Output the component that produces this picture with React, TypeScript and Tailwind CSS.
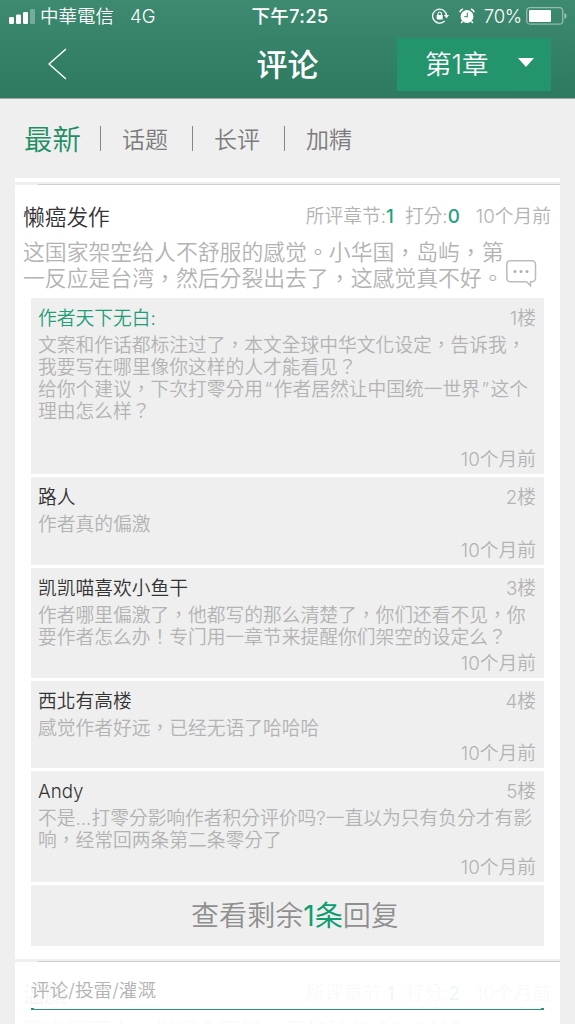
import clsx from 'clsx';

const tabs = ['话题', '长评', '加精'];

type Reply = {
  name: string;
  floor: string;
  lines: string[];
  author?: boolean;
  height: string;
};

const replies: Reply[] = [
  {
    name: '作者天下无白:',
    floor: '1楼',
    lines: [
      '文案和作话都标注过了，本文全球中华文化设定，告诉我，',
      '我要写在哪里像你这样的人才能看见？',
      '给你个建议，下次打零分用“作者居然让中国统一世界”这个',
      '理由怎么样？',
    ],
    author: true,
    height: 'h-[176px]',
  },
  { name: '路人', floor: '2楼', lines: ['作者真的偏激'], height: 'h-[88px]' },
  {
    name: '凯凯喵喜欢小鱼干',
    floor: '3楼',
    lines: [
      '作者哪里偏激了，他都写的那么清楚了，你们还看不见，你',
      '要作者怎么办！专门用一章节来提醒你们架空的设定么？',
    ],
    height: 'h-[110px]',
  },
  {
    name: '西北有高楼',
    floor: '4楼',
    lines: ['感觉作者好远，已经无语了哈哈哈'],
    height: 'h-[87px]',
  },
  {
    name: 'Andy',
    floor: '5楼',
    lines: [
      '不是...打零分影响作者积分评价吗?一直以为只有负分才有影',
      '响，经常回两条第二条零分了',
    ],
    height: 'h-[111px]',
  },
];

function StatusBar() {
  return (
    <div className="grid h-8 grid-cols-[1fr_auto_1fr] items-center pr-[8px] pl-[9px] text-[18.5px] leading-8">
      <div className="flex items-center">
        <svg width="26" height="15" viewBox="0 0 26 15" fill="white">
          <rect x="0" y="8" width="5" height="7" rx="1.3" />
          <rect x="7" y="5.5" width="5" height="9.5" rx="1.3" />
          <rect x="14" y="3" width="5" height="12" rx="1.3" />
          <rect x="21" y="0" width="5" height="15" rx="1.3" opacity="0.3" />
        </svg>
        <span className="ml-[5px]">中華電信</span>
        <span className="ml-4">4G</span>
      </div>
      <span className="ml-[4px] font-medium tracking-[0.3px]">下午7:25</span>
      <div className="flex items-center justify-end">
        <svg width="17" height="16" viewBox="0 0 17 16" fill="none" stroke="white" strokeWidth="1.3">
          <path d="M12.6 13A7 7 0 1 1 14.6 8" />
          <path d="M12 7h5l-2.5 3.4z" fill="white" stroke="none" />
          <rect x="4.7" y="7" width="6" height="4.4" rx="0.6" fill="white" stroke="none" />
          <path d="M6 7V5.7a1.7 1.7 0 0 1 3.4 0V7" strokeWidth="1.1" />
        </svg>
        <svg className="ml-[10px]" width="16" height="16" viewBox="0 0 16 16">
          <circle cx="8" cy="8.5" r="6.4" fill="white" />
          <path d="M.8 4.2A5 5 0 0 1 4 1M15.2 4.2A5 5 0 0 0 12 1M3.5 13.2 2.2 15M12.5 13.2l1.3 1.8" stroke="white" strokeWidth="1.5" fill="none" />
          <path d="M8.3 4.8v4H5.2" stroke="#378368" strokeWidth="1.1" fill="none" />
        </svg>
        <span className="ml-[9px] tracking-[-0.2px]">70%</span>
        <svg className="ml-[4px]" width="41" height="18" viewBox="0 0 41 18">
          <rect x="0.7" y="0.7" width="36" height="16.4" rx="3.2" fill="none" stroke="white" strokeOpacity="0.45" strokeWidth="1.3" />
          <rect x="3" y="3" width="22" height="12" rx="1" fill="white" />
          <path d="M38.4 6v6c1.4-.5 2.2-1.7 2.2-3s-.8-2.5-2.2-3z" fill="white" fillOpacity="0.5" />
        </svg>
      </div>
    </div>
  );
}

function Header() {
  return (
    <header className="h-[99px] border-b border-[#9aaba4] bg-linear-to-b from-[#3d8a70] to-[#2e7a60] text-white">
      <StatusBar />
      <div className="grid grid-cols-[1fr_auto_1fr] items-center pt-[6px] pr-[24px] pl-[48px]">
        <svg className="-mt-0.5" width="19" height="32" viewBox="0 0 19 32" fill="none" stroke="white" strokeWidth="1.5">
          <path d="M18 1 1 16l17 15" />
        </svg>
        <h1 className="-ml-6 text-[31px] leading-[53px] font-medium">评论</h1>
        <button className="flex h-[53px] w-[154px] items-center justify-between justify-self-end bg-[#23946c] pr-[17px] pl-[28px] text-[26.5px]">
          <span>第1章</span>
          <svg className="-mt-1" width="16" height="9" viewBox="0 0 16 9" fill="white">
            <path d="M0 0h16L8 9z" />
          </svg>
        </button>
      </div>
    </header>
  );
}

function Tabs() {
  return (
    <nav className="flex h-[79px] items-center pl-[24px] text-[23px] text-[#7b7b7b]">
      <span className="w-[59px] pt-[3px] text-[28.5px] whitespace-nowrap text-[#1f8e63]">最新</span>
      {tabs.map((tab, i) => (
        <div key={tab} className={clsx('flex items-center', i === 0 ? 'ml-[17px]' : 'ml-[23px]')}>
          <i className="h-[25px] w-px bg-[#858585]" />
          <span className="ml-[21px] w-[47px] pt-[3px]">{tab}</span>
        </div>
      ))}
    </nav>
  );
}

function ChatIcon() {
  return (
    <svg width="31" height="28" viewBox="0 0 31 28" fill="none" stroke="#bcbcbc" strokeWidth="1.5">
      <path d="M4 .8h22A3.500 3.500 0 0 1 29.500 4.300v14a3.500 3.500 0 0 1-3.500 3.500H24.500v4L20.500 21.800H4A3.500 3.500 0 0 1 .8 18.300v-14A3.500 3.500 0 0 1 4 .8z" />
      <g fill="#b0b0b0" stroke="none">
        <circle cx="9" cy="11.5" r="1.5" />
        <circle cx="15" cy="11.5" r="1.5" />
        <circle cx="21" cy="11.5" r="1.5" />
      </g>
    </svg>
  );
}

function Meta({ score }: { score: string }) {
  return (
    <div className="flex text-[18.75px] whitespace-nowrap text-[#b3b3b3]">
      <span>
        所评章节:<b className="font-medium text-[#1fa27b]">1</b>
      </span>
      <span className="ml-[11px]">
        打分:<b className="font-medium text-[#1fa27b]">{score}</b>
      </span>
      <span className="ml-[16px]">10个月前</span>
    </div>
  );
}

// curly quotes get a little extra room between the ideographs
function ReplyLine({ text }: { text: string }) {
  return (
    <p className="h-[22px] leading-[22px] whitespace-nowrap">
      {text.split(/([“”])/).map((part, i) =>
        part === '“' || part === '”' ? (
          <span key={i} className="mx-[1.5px]">
            {part}
          </span>
        ) : (
          part
        )
      )}
    </p>
  );
}

function ReplyItem({ reply }: { reply: Reply }) {
  return (
    <article className={clsx('flex shrink-0 flex-col bg-[#efefef] pt-[8px] pr-[8px] pl-[7px] text-[18.75px] text-[#b3b3b3]', reply.height)}>
      <div className="flex h-[29px] justify-between leading-[26px]">
        <span className={reply.author ? 'text-[#1f9e77]' : 'text-[#333]'}>{reply.name}</span>
        <span>{reply.floor}</span>
      </div>
      {reply.lines.map((line) => (
        <ReplyLine key={line} text={line} />
      ))}
      <time className="mt-auto self-end pb-[2px] leading-[24px]">10个月前</time>
    </article>
  );
}

function Divider() {
  return <div className="ml-[23px] h-px bg-[#cfcfcf]" />;
}

export default function App() {
  return (
    <div className="relative h-[1024px] w-[575px] overflow-hidden bg-[#efefef] font-['Inter','Noto_Sans_CJK_TC','Noto_Sans_CJK_SC',sans-serif] font-[350]">
      <Header />
      <Tabs />
      <main className="mr-[15px] ml-[15px]">
        <div className="mb-[2px] h-[4px] bg-white" />
        <Divider />
        <section className="h-[774px] bg-white">
          <div className="flex h-[52px] items-center justify-between pt-[12px] pr-[9px] pl-[8px]">
            <span className="text-[21.7px] text-[#333]">懒癌发作</span>
            <Meta score="0" />
          </div>
          <div className="flex h-[61px] pt-[2px] pl-[8px] text-[21.85px] leading-[26px] whitespace-nowrap text-[#b3b3b3]">
            <p className="w-[483px] shrink-0">
              这国家架空给人不舒服的感觉。小华国，岛屿，第
              <br />
              一反应是台湾，然后分裂出去了，这感觉真不好。
            </p>
            <div className="mt-[21px] shrink-0">
              <ChatIcon />
            </div>
          </div>
          <div className="mr-[16px] ml-[16px] flex flex-col gap-[3px]">
            {replies.map((reply) => (
              <ReplyItem key={reply.floor} reply={reply} />
            ))}
            <button className="h-[61px] bg-[#efefef] pt-[2px] pl-[15px] text-[28.1px] text-[#8f8f8f]">
              查看剩余<span className="font-normal text-[#0f9d70]">1条</span>回复
            </button>
          </div>
        </section>
        <div className="h-[2px]" />
        <Divider />
        <section className="h-[70px] bg-white">
          <div className="flex h-[50px] items-center justify-between pt-[15px] pr-[9px] pl-[8px]">
            <span className="text-[21.7px] text-[#777]">溫顏</span>
            <Meta score="2" />
          </div>
          <p className="pt-[5px] pl-[8px] text-[21.8px] leading-[26px] whitespace-nowrap text-[#b3b3b3]">
            跟文案不太一样啊？不过，又加法(0.00..00)0
          </p>
        </section>
      </main>

      {/* comment field floats over the scrolling list */}
      <div className="absolute inset-x-[15px] bottom-0 h-[62px] bg-white/92 px-[16px]">
        <div className="flex h-[46px] items-center pt-[13px] text-[18.7px] text-[#b3b3b3]">
          评论/投雷/灌溉
        </div>
        <div className="flex h-[2px] items-end justify-between">
          <i className="h-[2px] w-[3px] bg-[#2a9570]" />
          <i className="h-px grow bg-[#2a9570]" />
          <i className="h-[2px] w-[3px] bg-[#2a9570]" />
        </div>
      </div>
    </div>
  );
}
